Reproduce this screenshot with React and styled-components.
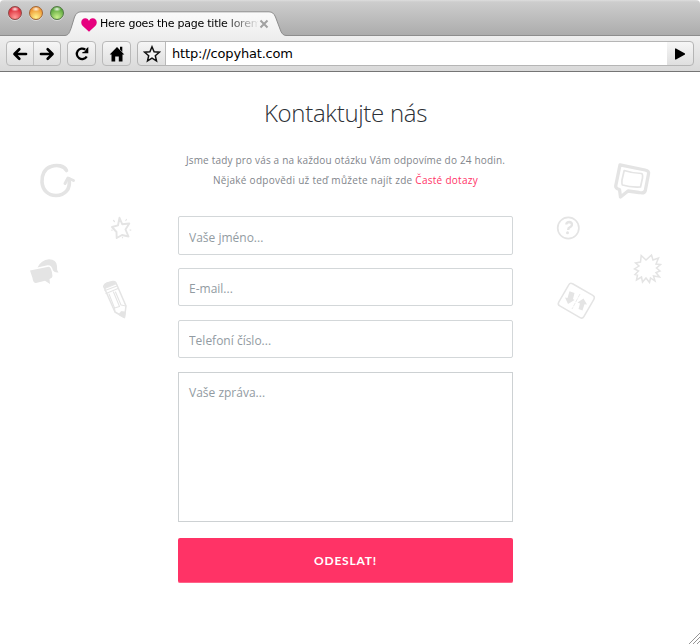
import React from "react";
import styled, { createGlobalStyle } from "styled-components";

const GlobalStyle = createGlobalStyle`
  * { box-sizing: border-box; }
  body { margin: 0; background: #fff; }
`;

const Browser = styled.div`
  width: 700px;
  height: 644px;
  display: flex;
  flex-direction: column;
  overflow: hidden;
  background: #fff;
`;

const TitleBar = styled.header`
  height: 36px;
  flex: none;
  display: flex;
  align-items: flex-start;
  background: linear-gradient(#dedede 0, #cdcdcd 2px, #acacac 35px);
  border-bottom: 1px solid #8d8d8d;
  border-radius: 4px 4px 0 0;
`;

const Lights = styled.div`
  display: flex;
  gap: 7px;
  padding: 6px 0 0 8px;
  width: 65px;
`;

const Light = styled.span`
  width: 14px;
  height: 14px;
  flex: none;
  border-radius: 50%;
  border: 1px solid ${(p) => p.$edge};
  background:
    radial-gradient(ellipse 4px 2.5px at 50% 17%, rgba(255, 255, 255, 0.9), transparent),
    radial-gradient(circle at 50% 85%, ${(p) => p.$glow} 0, ${(p) => p.$color} 75%);
  box-shadow: 0 1px 0 rgba(255, 255, 255, 0.45);
`;

const Tab = styled.div`
  position: relative;
  width: 221px;
  height: 25px;
  margin-top: 11px;
  padding: 0 17px 0 16px;
  display: flex;
  align-items: center;
`;

const TabShape = styled.svg`
  position: absolute;
  left: 0;
  top: 0;
`;

const TabIcon = styled.svg`
  position: relative;
  flex: none;
  margin-top: 2px;
`;

const TabTitle = styled.span`
  position: relative;
  width: 158px;
  margin-left: 3px;
  white-space: nowrap;
  font: 11px/14px "DejaVu Sans", sans-serif;
  letter-spacing: -0.24px;
  color: #000;
  mask-image: linear-gradient(90deg, #000 78%, rgba(0, 0, 0, 0.05));
`;

const TabClose = styled.svg`
  position: relative;
  flex: none;
  margin-left: 1px;
`;

const Toolbar = styled.nav`
  height: 36px;
  flex: none;
  display: flex;
  align-items: flex-start;
  padding: 5px 6px 0;
  background: linear-gradient(#efefef, #d9d9d9);
  border-bottom: 1px solid #757575;
`;

const ButtonGroup = styled.div`
  display: flex;
  height: 25px;
  width: ${(p) => p.$width}px;
  margin-right: ${(p) => p.$gap}px;
  border: 1px solid #b9b9b9;
  border-radius: 4px;
  background: linear-gradient(#f6f6f6, #dfdfdf);
`;

const ToolButton = styled.button`
  flex: 1;
  display: flex;
  align-items: center;
  justify-content: center;
  padding: 0;
  border: 0;
  background: none;
  & + & { border-left: 1px solid #c2c2c2; }
`;

const AddressBar = styled.div`
  flex: 1;
  display: flex;
  height: 25px;
  border: 1px solid #b5b5b5;
  border-radius: 4px;
  background: linear-gradient(#f6f6f6, #dfdfdf);
`;

const AddressButton = styled.button`
  width: ${(p) => p.$width}px;
  flex: none;
  display: flex;
  align-items: center;
  justify-content: center;
  padding: 0;
  border: 0;
  background: none;
`;

const Address = styled.div`
  flex: 1;
  padding-left: 6px;
  border-left: 1px solid #b9b9b9;
  background: #fff;
  color: #000;
  font: 13px/23px "DejaVu Sans", sans-serif;
  letter-spacing: -0.18px;
`;

const Page = styled.main`
  position: relative;
  flex: 1;
  display: grid;
  grid-template-columns: 178px 335px 187px;
  font-family: "Open Sans", sans-serif;
`;

const Doodles = styled.svg`
  display: block;
  fill: none;
  stroke: #e4e4e4;
  stroke-linecap: round;
  stroke-linejoin: round;
`;

const Contact = styled.section`
  display: flex;
  flex-direction: column;
`;

const Heading = styled.h1`
  margin: 23px 0 0;
  text-align: center;
  font-size: 24px;
  line-height: 36px;
  font-weight: 300;
  letter-spacing: -0.3px;
  color: #2c3036;
`;

const Intro = styled.div`
  margin: 19px -10px 0;
  text-align: center;
  font-size: 10px;
  line-height: 20px;
  color: #7f858b;
`;

const IntroLine = styled.p`
  margin: 0;
  letter-spacing: ${(p) => p.$spacing}px;
`;

const FaqLink = styled.a`
  color: #ff3366;
  text-decoration: none;
`;

const Form = styled.form`
  display: flex;
  flex-direction: column;
  margin-top: 26px;
`;

const Field = styled.input`
  display: block;
  width: 335px;
  height: ${(p) => p.$height || 38}px;
  margin: 0 0 ${(p) => p.$gap || 14}px;
  padding: 3px 10px 0;
  border: 1px solid #d3d7d9;
  border-radius: 2px;
  background: #fff;
  font: 12px/18px "Open Sans", sans-serif;
  color: #3c4248;
  &::placeholder { color: #929ba2; opacity: 1; }
`;

const Message = styled.textarea`
  display: block;
  width: 335px;
  height: 150px;
  margin: 0 0 16px;
  padding: 11px 10px;
  border: 1px solid #cdd1d3;
  border-radius: 0;
  resize: none;
  background: #fff;
  font: 12px/18px "Open Sans", sans-serif;
  &::placeholder { color: #929ba2; opacity: 1; }
`;

const Submit = styled.button`
  height: 45px;
  padding: 1px 0 0;
  border: 0;
  border-bottom: 1px solid #ff6389;
  border-radius: 2px;
  background: #ff3366;
  color: #fff;
  font: 700 12px/43px Lato, sans-serif;
  letter-spacing: 0.8px;
`;

const ResizeGrip = styled.svg`
  position: absolute;
  right: 0;
  bottom: 0;
`;

const Arrow = ({ flip }) => (
  <svg width="16" height="14" viewBox="0 0 16 14">
    <path
      d="M14 7H3M7.3 2.3 2.5 7l4.8 4.7"
      transform={flip ? "matrix(-1 0 0 1 16 0)" : undefined}
      fill="none" stroke="#000" strokeWidth="2.7" strokeLinecap="round" strokeLinejoin="round"
    />
  </svg>
);

function LeftDoodles() {
  return (
    <Doodles width="178" height="300" viewBox="0 72 178 300">
      <path strokeWidth="3.600" d="M66.500 170.500C64 165.500 57 164.500 51 166.500C44.500 168.500 41.500 175 42 182C42.500 190 48 195.500 56 195.500C64.500 195.500 71 189.500 69 179" />
      <path strokeWidth="3" d="M65 183.500L68 178L73.500 180.500" />
      <path strokeWidth="1.900" d="M119.500 217.800L122.200 224.200L129.300 223.500L125.500 229.500L128.500 236.500L122 235L116.700 238L116.500 232L112 227L118 225.300Z" />
      <path strokeWidth="1.200" d="M113.500 220.500l1 1M126.500 219.500l-.7 1M130 230l.8.2M122.500 237.300v.4M111.800 230.200h.3" />
      <g fill="#e4e4e4" stroke="none">
        <path d="M30 270.500L48.500 266.800Q51.500 266.800 52.500 276Q52.600 278 49.500 279L50 284L45 280.800L36 283Q33 283 32.500 278Z" />
        <path d="M37.500 267.500Q41 260 49 259.300Q56.500 259.500 57 266Q56.500 270 58.500 272.500Q54.500 273 53 270.500Q51.500 264.500 47.500 265.200Z" />
      </g>
      <path strokeWidth="1.500" d="M103.700 286.500Q104 284.500 107 283L113 281.500Q115.500 281 116.500 284L126 306L124.500 317.500L115 312Z" />
      <path fill="#e4e4e4" strokeWidth=".8" d="M104 285.500Q106 282.500 113 281.500Q115.500 281.500 116 284L105 288.500Z" />
      <path strokeWidth="1.100" d="M105 290.500L117 286M106 293.500L118 288.500M109 294L114.500 308L119.500 306.500L113.500 292M115.500 292L121 305L126 306M114.500 308L115 312" />
      <path fill="#e4e4e4" strokeWidth=".8" d="M119 314.500L121 311.500L125.500 312L124.500 317.500Z" />
    </Doodles>
  );
}

function RightDoodles() {
  return (
    <Doodles width="187" height="300" viewBox="513 72 187 300">
      <path strokeWidth="3.300" d="M620 164.800L645 170Q649.500 171 648.500 174L645.300 190.500Q644.500 193.800 639 192.500L628 191L620.500 197L619.500 189.500Q615.500 188.500 615.700 186Z" />
      <path strokeWidth="1.700" d="M624.200 170.500Q632 173.200 641.500 173.500Q643 174 642.500 178L640.500 187Q630 187.500 622.500 185Q621.700 184.500 622 180Z" />
      <circle cx="568.300" cy="228" r="10.600" strokeWidth="1.700" />
      <path strokeWidth="2.400" strokeLinecap="butt" d="M566.300 224.500Q566.500 222 569.500 222Q572.200 222.500 571.900 225Q571.500 226.800 569.700 227.300Q568.200 227.800 568.200 230" />
      <circle cx="567.500" cy="232.700" r="1.500" fill="#e4e4e4" stroke="none" />
      <path strokeWidth="1.500" strokeLinejoin="miter" d="M641.200 255.500L646 260L651.500 255L653 260L658.500 258L656 264L660.500 264.500L656.500 268L660 271L656 272.500L659.500 277L653.500 276L655 281L650.500 278L649.500 282.500L646 278L642.500 282L641.500 277L636.500 280L637.500 275L635 274.500L638.500 271L634.500 269L639 266L635.500 263L640.500 262Z" />
      <rect x="-14.500" y="-12.800" width="29" height="25.600" rx="2.800" strokeWidth="1.500" transform="translate(576.300 300.700) rotate(30)" />
      <path strokeWidth=".8" strokeDasharray="4 1" strokeLinecap="butt" d="M580 294L572 309" />
      <g fill="#e4e4e4" stroke="none">
        <path d="M569.500 291.300L574.500 293L573 299L574.500 300L568 304L565 297.500L567.500 298Z" />
        <path d="M583.500 298.500L587 304.500L584.500 304.300L582.500 310.500L578.500 309L580 303.500L577.500 302.500Z" />
      </g>
    </Doodles>
  );
}

export default function App() {
  return (
    <Browser>
      <GlobalStyle />
      <TitleBar>
        <Lights>
          <Light $edge="#8d4946" $color="#db2835" $glow="#ff9a97" />
          <Light $edge="#a16635" $color="#ed922e" $glow="#fff28b" />
          <Light $edge="#517844" $color="#58a43b" $glow="#c9f08a" />
        </Lights>
        <Tab>
          <TabShape width="221" height="25" viewBox="0 0 221 25">
            <defs>
              <linearGradient id="tab-fill" x2="0" y2="1">
                <stop stopColor="#fafafa" />
                <stop offset="1" stopColor="#efefef" />
              </linearGradient>
            </defs>
            <path
              d="M0 25V24.500C3.500 24 4 22.500 6 17.500L9.500 6Q11.500 .8 16 .8H204Q208.500 .8 210.500 6L215 18Q217 24.500 221 24.500V25Z"
              fill="url(#tab-fill)"
            />
            <path
              d="M0 24.500C3.500 24 4 22.500 6 17.500L9.500 6Q11.500 .8 16 .8H204Q208.500 .8 210.500 6L215 18Q217 24.500 221 24.500"
              fill="none" stroke="#8d8d8d"
            />
          </TabShape>
          <TabIcon width="16" height="14" viewBox="0 0 16 14">
            <path fill="#e6007e" d="M8 13.800L1.500 7.700C-1.200 4.500 .8.200 4.300.2C6.300.2 7.500 1.500 8 3C8.500 1.500 9.700.2 11.700.2C15.200.2 17.200 4.500 14.500 7.700Z" />
          </TabIcon>
          <TabTitle>Here goes the page title lorem</TabTitle>
          <TabClose width="10" height="10" viewBox="0 0 10 10">
            <path d="M1.500 1.500l7 7M8.500 1.500l-7 7" stroke="#a1a1a1" strokeWidth="2" />
          </TabClose>
        </Tab>
      </TitleBar>
      <Toolbar>
        <ButtonGroup $width={55} $gap={6}>
          <ToolButton aria-label="Back"><Arrow /></ToolButton>
          <ToolButton aria-label="Forward"><Arrow flip /></ToolButton>
        </ButtonGroup>
        <ButtonGroup $width={29} $gap={6}>
          <ToolButton aria-label="Reload">
            <svg width="16" height="16" viewBox="0 0 16 16">
              <path d="M11.300 3.600A5.300 5.300 0 1 0 12.700 10.500" fill="none" stroke="#000" strokeWidth="2.300" />
              <path d="M14.300 1V7.300H8.300V6.200L10.700 5.500L12.500 2.500Z" />
            </svg>
          </ToolButton>
        </ButtonGroup>
        <ButtonGroup $width={29} $gap={6}>
          <ToolButton aria-label="Home">
            <svg width="16" height="16" viewBox="0 0 16 16">
              <path d="M8 1L15.300 8.500H13.500V15.500H9.800V10.500H6.200V15.500H2.500V8.500H.7ZM11 .8H13.300V6L11 3.500Z" />
            </svg>
          </ToolButton>
        </ButtonGroup>
        <AddressBar>
          <AddressButton $width={27} aria-label="Bookmark">
            <svg width="18" height="18" viewBox="0 0 18 18">
              <path d="M9 1.800L11.100 6.700L16.300 7.200L12.300 10.700L13.500 15.900L9 13.200L4.500 15.900L5.700 10.700L1.700 7.200L6.900 6.700Z" fill="#f4f4f4" stroke="#111" strokeWidth="1.500" />
            </svg>
          </AddressButton>
          <Address>http://copyhat.com</Address>
          <AddressButton $width={26} aria-label="Go">
            <svg width="12" height="12" viewBox="0 0 12 12">
              <path d="M1 .5H2L11 5.500V6.500L2 11.500H1Z" />
            </svg>
          </AddressButton>
        </AddressBar>
      </Toolbar>
      <Page>
        <LeftDoodles />
        <Contact>
          <Heading>Kontaktujte nás</Heading>
          <Intro>
            <IntroLine $spacing={0.18}>
              Jsme tady pro vás a na každou otázku Vám odpovíme do 24 hodin.
            </IntroLine>
            <IntroLine $spacing={0.27}>
              Nějaké odpovědi už teď můžete najít zde <FaqLink>Časté dotazy</FaqLink>
            </IntroLine>
          </Intro>
          <Form>
            <Field $height={39} $gap={13} placeholder="Vaše jméno..." />
            <Field placeholder="E-mail..." />
            <Field placeholder="Telefoní číslo..." />
            <Message placeholder="Vaše zpráva..." />
            <Submit type="button">ODESLAT!</Submit>
          </Form>
        </Contact>
        <RightDoodles />
        <ResizeGrip width="11" height="11" viewBox="0 0 11 11">
          <path d="M0 11L11 0M4 11L11 4M8 11L11 8" stroke="#8a8a8a" strokeWidth=".9" />
        </ResizeGrip>
      </Page>
    </Browser>
  );
}
